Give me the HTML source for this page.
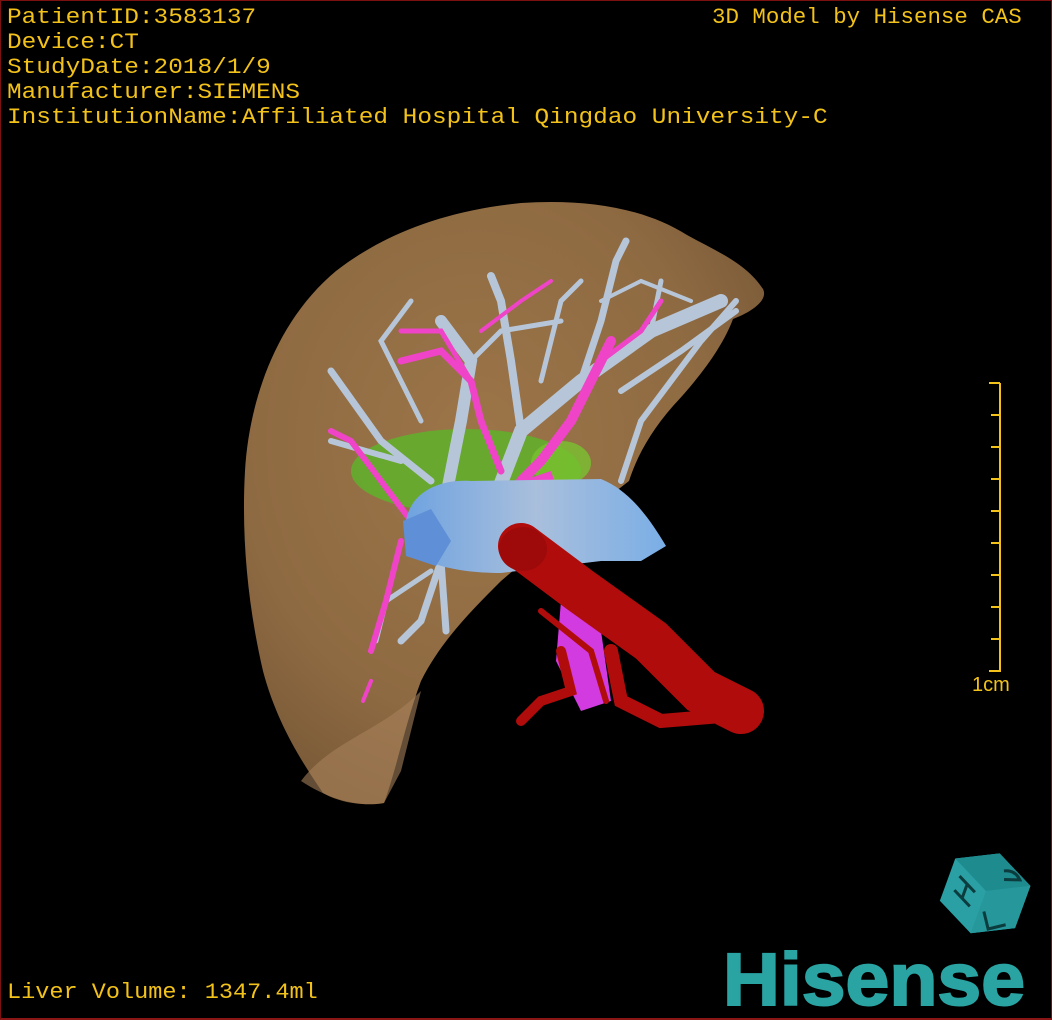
<!DOCTYPE html>
<html><head><meta charset="utf-8"><style>
html,body{margin:0;padding:0;background:#000;}
#w{position:relative;width:1052px;height:1020px;background:#000;overflow:hidden;box-sizing:border-box;border:1px solid #7a1010;border-bottom:2px solid #8a1515;}
.t{position:absolute;color:#f2c21b;font-family:"Liberation Mono","DejaVu Sans Mono",monospace;font-size:22px;line-height:25px;white-space:pre;transform-origin:left top;}
</style></head><body><div id="w">
<svg width="1052" height="1020" style="position:absolute;left:0;top:0">
<defs>
<radialGradient id="lv" cx="45%" cy="40%" r="65%"><stop offset="0" stop-color="#9c7548"/><stop offset="0.7" stop-color="#8e6a42"/><stop offset="1" stop-color="#7a5a38"/></radialGradient>
<linearGradient id="bl" x1="0" y1="0" x2="1" y2="0"><stop offset="0" stop-color="#6fa3e0"/><stop offset="0.5" stop-color="#a9bfdc"/><stop offset="1" stop-color="#7aaee6"/></linearGradient>
</defs>
<path d="M244,470 C248,400 275,320 335,270 C380,235 440,210 520,202 C580,198 640,205 686,234 C715,250 745,262 762,288 C768,300 748,312 732,318 C722,345 700,375 672,405 C650,430 636,455 628,480 C590,510 540,545 500,580 C470,610 440,640 420,680 C405,720 395,770 383,802 C360,806 335,800 322,792 C300,760 275,720 262,670 C248,610 240,540 244,470 Z" fill="url(#lv)"/>
<path d="M300,780 C330,740 380,730 420,690 L400,770 L383,802 C360,806 330,800 300,780Z" fill="#a7805a" opacity="0.6"/>
<ellipse cx="465" cy="470" rx="115" ry="42" fill="#5fb12c" opacity="0.85"/>
<ellipse cx="560" cy="462" rx="30" ry="22" fill="#78c22f" opacity="0.8"/>
<g fill="none" stroke="#b6c6d8" stroke-linecap="round">
<path d="M470,560 L520,430 L580,380 L650,330 L720,300" stroke-width="14"/>
<path d="M440,520 L460,420 L470,360 L440,320" stroke-width="12"/>
<path d="M520,430 L510,360 L500,300 L490,275" stroke-width="8"/>
<path d="M580,380 L600,320 L615,260 L625,240" stroke-width="7"/>
<path d="M650,330 L660,280" stroke-width="5"/>
<path d="M620,390 L680,350 L735,310" stroke-width="6"/>
<path d="M620,480 L640,420 L700,340 L735,300" stroke-width="6"/>
<path d="M430,480 L380,440 L330,370" stroke-width="7"/>
<path d="M400,460 L330,440" stroke-width="6"/>
<path d="M420,420 L380,340 L410,300" stroke-width="5"/>
<path d="M470,360 L500,330 L560,320" stroke-width="5"/>
<path d="M540,380 L560,300 L580,280" stroke-width="5"/>
<path d="M600,300 L640,280 L690,300" stroke-width="4"/>
<path d="M440,560 L420,620 L400,640" stroke-width="7"/>
<path d="M440,560 L445,630" stroke-width="7"/>
<path d="M430,570 L385,600 L375,640" stroke-width="5"/>
</g>
<g fill="none" stroke="#ef44c8" stroke-linecap="round">
<path d="M520,480 L540,460 L570,420 L590,380 L610,340" stroke-width="10"/>
<path d="M500,470 L480,420 L470,380 L440,350 L400,360" stroke-width="7"/>
<path d="M470,380 L440,330 L400,330" stroke-width="5"/>
<path d="M480,330 L520,300 L550,280" stroke-width="4"/>
<path d="M600,360 L640,330 L660,300" stroke-width="5"/>
<path d="M410,520 L380,480 L350,440 L330,430" stroke-width="6"/>
<path d="M400,540 L385,600 L370,650" stroke-width="6"/>
<path d="M370,680 L362,700" stroke-width="4"/>
</g>
<path d="M520,480 L550,470 L560,500 L530,510Z" fill="#ef44c8"/>
<path d="M405,520 C410,490 440,478 470,480 L600,478 C630,490 650,520 665,545 L640,560 L600,560 L500,572 C450,572 410,560 405,540Z" fill="url(#bl)"/>
<path d="M402,520 L430,508 L450,540 L435,565 L405,555Z" fill="#5f8fd6"/>
<path d="M560,600 L600,630 L610,700 L580,710 L555,660Z" fill="#d23be0"/>
<g fill="none" stroke="#b10c0c" stroke-linecap="round">
<path d="M520,545 L580,590 L650,640 L700,690 L740,710" stroke-width="46"/>
<path d="M610,650 L620,700 L660,720 L720,715" stroke-width="14"/>
<path d="M560,650 L570,690 L540,700 L520,720" stroke-width="10"/>
<path d="M540,610 L590,650 L605,700" stroke-width="6"/>
</g>
<ellipse cx="522" cy="548" rx="24" ry="22" fill="#9e0a0a"/>
<g stroke="#f2c21b" stroke-width="2">
<line x1="999" y1="382" x2="999" y2="671"/>
<line x1="988" y1="382" x2="999" y2="382"/><line x1="988" y1="670" x2="999" y2="670"/>
<line x1="990" y1="414" x2="999" y2="414"/><line x1="990" y1="446" x2="999" y2="446"/><line x1="990" y1="478" x2="999" y2="478"/><line x1="990" y1="510" x2="999" y2="510"/><line x1="990" y1="542" x2="999" y2="542"/><line x1="990" y1="574" x2="999" y2="574"/><line x1="990" y1="606" x2="999" y2="606"/><line x1="990" y1="638" x2="999" y2="638"/>
</g>
<text x="971" y="690" fill="#f2c21b" font-family="Liberation Sans,sans-serif" font-size="20">1cm</text>
<g transform="translate(985,890) rotate(20)">
<polygon points="-40,-20 0,-40 40,-20 40,25 0,45 -40,25" fill="#2aa0a4"/>
<polygon points="0,-40 40,-20 0,0 -40,-20" fill="#1e8b8f"/>
<polygon points="0,0 40,-20 40,25 0,45" fill="#26979b"/>
<path d="M-30,-5 L-10,5 M-30,10 L-10,20 M-20,0 L-20,15 M5,20 L15,35 L30,25 M10,-25 q10,-5 18,3 l-15,5" stroke="#0b3c3e" stroke-width="3" fill="none"/>
</g>
<text x="722" y="1004" fill="#2aa3a3" font-family="Liberation Sans,sans-serif" font-weight="bold" font-size="74" textLength="302" lengthAdjust="spacingAndGlyphs" stroke="#2aa3a3" stroke-width="2">Hisense</text>
</svg>
<div class="t" style="left:6px;top:4px;transform:scaleX(1.11)">PatientID:3583137
Device:CT
StudyDate:2018/1/9
Manufacturer:SIEMENS
InstitutionName:Affiliated Hospital Qingdao University-C</div>
<div class="t" style="left:711px;top:4px;transform:scaleX(1.02)">3D Model by Hisense CAS</div>
<div class="t" style="left:6px;top:979px;transform:scaleX(1.07)">Liver Volume: 1347.4ml</div>
</div></body></html>
